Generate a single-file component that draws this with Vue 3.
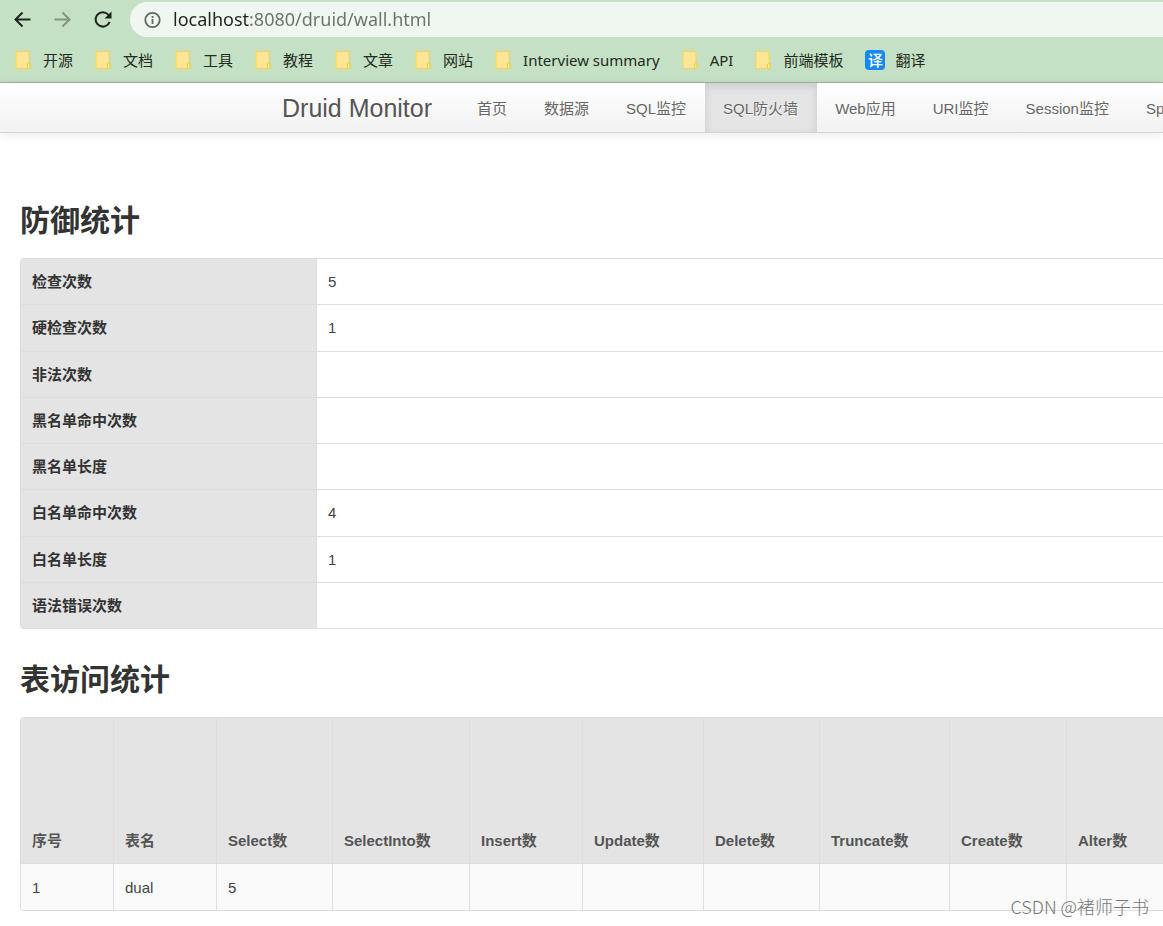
<script setup>
import { ref } from 'vue'

const address = ref('localhost:8080/druid/wall.html')
const folders = ['开源', '文档', '工具', '教程', '文章', '网站', 'Interview summary', 'API', '前端模板']
const menu = ['首页', '数据源', 'SQL监控', 'SQL防火墙', 'Web应用', 'URI监控', 'Session监控', 'Spring监控']
const active = 'SQL防火墙'

const defence = [
  ['检查次数', '5'],
  ['硬检查次数', '1'],
  ['非法次数', ''],
  ['黑名单命中次数', ''],
  ['黑名单长度', ''],
  ['白名单命中次数', '4'],
  ['白名单长度', '1'],
  ['语法错误次数', '']
]

const columns = [
  { name: '序号', width: 93 },
  { name: '表名', width: 103 },
  { name: 'Select数', width: 116 },
  { name: 'SelectInto数', width: 137 },
  { name: 'Insert数', width: 113 },
  { name: 'Update数', width: 121 },
  { name: 'Delete数', width: 116 },
  { name: 'Truncate数', width: 130 },
  { name: 'Create数', width: 117 },
  { name: 'Alter数', width: 0 }
]
const rows = [['1', 'dual', '5', '', '', '', '', '', '', '']]
</script>

<template>
  <div class="page">
    <div class="browser">
      <div class="toolbar">
        <button type="button" class="tool" aria-label="Back">
          <svg width="20" height="20" viewBox="0 0 20 20" fill="none" stroke="#202421" stroke-width="2">
            <path d="M18.5 9.5H4M10.5 2.500l-7 7 7 7" />
          </svg>
        </button>
        <button type="button" class="tool" aria-label="Forward">
          <svg width="20" height="20" viewBox="0 0 20 20" fill="none" stroke="#829482" stroke-width="2">
            <path d="M2.500 9.500H17M10.500 2.500l7 7-7 7" />
          </svg>
        </button>
        <button type="button" class="tool" aria-label="Reload">
          <svg width="20" height="20" viewBox="0 0 20 20" fill="none">
            <path d="M17.600 11.800A7.200 7.200 0 1 1 16 4.400L17.500 6" stroke="#202421" stroke-width="2" />
            <path d="M19.500 1.500v7h-7z" fill="#202421" />
          </svg>
        </button>
        <div class="omnibox">
          <svg width="18" height="18" viewBox="0 0 18 18" fill="none" stroke="#5f6661">
            <circle cx="9.500" cy="9" r="7.200" stroke-width="1.800" />
            <path d="M9.500 8v5M9.500 5v2" stroke-width="1.800" />
          </svg>
          <input v-model="address" class="address" type="text" aria-label="Address" />
        </div>
      </div>
      <div class="bookmarks">
        <a v-for="f in folders" :key="f" href="#" class="bookmark">
          <svg width="16" height="20" viewBox="0 0 16 20">
            <path d="M1 1.500h13v12h1v5H1z" fill="#ffe694" stroke="#fbd44c" />
            <path d="M12.500 18.500v-3.700q0-1.300 1.300-1.300h1.200v3.700q0 1.300-1.300 1.300z" fill="#ffe694" stroke="#f4cb45" />
          </svg>
          <span>{{ f }}</span>
        </a>
        <a href="#" class="bookmark translate">
          <span class="badge" aria-hidden="true">译</span>
          <span>翻译</span>
        </a>
      </div>
    </div>

    <nav class="navbar">
      <a href="#" class="brand">Druid Monitor</a>
      <a v-for="m in menu" :key="m" href="#" class="item" :class="{ active: m === active }">{{ m }}</a>
    </nav>

    <main class="content">
      <h3>防御统计</h3>
      <table class="grid defence">
        <tbody>
          <tr v-for="[label, value] in defence" :key="label">
            <th scope="row">{{ label }}</th>
            <td>{{ value }}</td>
          </tr>
        </tbody>
      </table>

      <h3>表访问统计</h3>
      <table class="grid access">
        <colgroup>
          <col v-for="c in columns" :key="c.name" :style="{ width: c.width ? c.width + 'px' : 'auto' }" />
        </colgroup>
        <thead>
          <tr>
            <th v-for="c in columns" :key="c.name" scope="col">{{ c.name }}</th>
          </tr>
        </thead>
        <tbody>
          <tr v-for="row in rows" :key="row[0]">
            <td v-for="(cell, i) in row" :key="i">{{ cell }}</td>
          </tr>
        </tbody>
      </table>
      <span class="watermark">CSDN @褚师子书</span>
    </main>
  </div>
</template>

<style>
body {
  margin: 0;
  background: #fff;
}
</style>

<style scoped>
.page {
  overflow: hidden;
  font-family: "Liberation Sans", "Noto Sans CJK SC", sans-serif;
  font-size: 15px;
  color: #333;
}

a {
  color: inherit;
  text-decoration: none;
}

.browser {
  background: #c5e1c5;
  border-bottom: 1px solid #9dba9d;
  font-family: "Noto Sans", "Noto Sans CJK SC", sans-serif;
}

.toolbar {
  display: flex;
  align-items: center;
  gap: 20px;
  padding: 2px 0 0 12px;
}

.tool {
  display: flex;
  padding: 0;
  border: 0;
  background: none;
}

.omnibox {
  display: flex;
  flex: 1;
  align-items: center;
  gap: 12px;
  height: 35px;
  margin-left: -2px;
  padding-left: 13px;
  border-radius: 18px 0 0 18px;
  background: #f0f7f0;
}

.address {
  flex: 1;
  padding: 0 0 2px;
  border: 0;
  outline: 0;
  background: linear-gradient(90deg, #202421 76px, #6b716c 76px);
  background-clip: text;
  -webkit-background-clip: text;
  color: transparent;
  font: 18px/26px "Noto Sans", sans-serif;
}

.bookmarks {
  display: flex;
  align-items: center;
  gap: 22px;
  height: 45px;
  padding-left: 15px;
  white-space: nowrap;
  color: #1f2a20;
}

.bookmark {
  display: flex;
  align-items: center;
  gap: 12px;
}

.translate {
  gap: 10px;
}

.badge {
  width: 20px;
  border-radius: 4px;
  background: #1488f5;
  color: #fff;
  font-size: 15px;
  font-weight: 500;
  line-height: 20px;
  text-align: center;
}

.navbar {
  display: flex;
  height: 49px;
  padding-left: 282px;
  border-bottom: 1px solid #d4d4d4;
  background: linear-gradient(#fff, #f2f2f2);
  box-shadow: 0 1px 10px rgba(0, 0, 0, 0.1);
  color: #666;
  line-height: 51px;
  white-space: nowrap;
  text-shadow: 0 1px 0 #fff;
}

.brand {
  margin-right: 27px;
  color: #555;
  font-size: 25px;
}

.item {
  padding: 0 19px 0 18px;
}

.active {
  background: #e5e5e5;
  box-shadow: inset 0 3px 8px rgba(0, 0, 0, 0.125);
}

.content {
  position: relative;
  padding: 66px 0 15px 20px;
}

h3 {
  margin: 0 0 15px;
  font-size: 30px;
  line-height: 44px;
}

.grid {
  width: 100%;
  border: 1px solid #ddd;
  border-width: 1px 0 0 1px;
  border-radius: 4px 0 0 4px;
  border-collapse: separate;
  border-spacing: 0;
  table-layout: fixed;
  overflow: hidden;
}

.grid th,
.grid td {
  box-sizing: border-box;
  padding: 12px 11px;
  border: 1px solid #ddd;
  border-width: 0 1px 1px 0;
  line-height: 21px;
  text-align: left;
}

.grid th {
  background: #e4e4e4;
}

.grid td {
  color: #444;
}

.grid tr > :last-child {
  border-right: 0;
}

.defence {
  height: 371px;
  margin-bottom: 29px;
}

.defence th {
  width: 296px;
}

.access thead th {
  height: 146px;
  vertical-align: bottom;
  color: #555;
}

.access tbody td {
  height: 47px;
  background: #f9f9f9;
}

.watermark {
  position: absolute;
  right: 14px;
  bottom: 7px;
  color: #777;
  font: 300 18px/26px "Noto Sans CJK SC", sans-serif;
}
</style>
